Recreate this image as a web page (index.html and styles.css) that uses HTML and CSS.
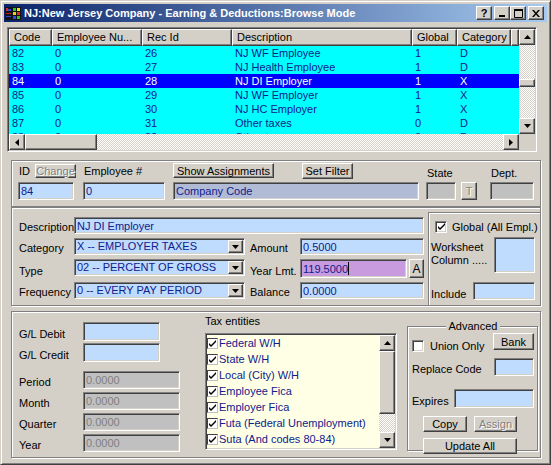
FILE: index.html
```html
<!DOCTYPE html>
<html lang="en">
<head>
    <meta charset="UTF-8">
    <title>Earning &amp; Deductions</title>
    <link rel="stylesheet" href="styles.css">
</head>
<body>
<div class="window">
    <div class="titlebar">
        <svg class="app-icon" width="16" height="16" viewBox="0 0 16 16">
            <rect x="0" y="2" width="16" height="13" fill="#141414"/>
            <rect x="1" y="3" width="2" height="3" fill="#e02828"/>
            <rect x="3" y="4" width="3" height="2" fill="#3048e0"/>
            <rect x="1" y="8" width="5" height="1" fill="#c82020"/>
            <rect x="1" y="11" width="5" height="1" fill="#3048d0"/>
            <rect x="8" y="3" width="3" height="3" fill="#28c828"/>
            <rect x="12" y="3" width="3" height="3" fill="#f0e028"/>
            <rect x="8" y="7" width="3" height="3" fill="#f0d020"/>
            <rect x="12" y="7" width="3" height="3" fill="#e02828"/>
            <rect x="8" y="11" width="3" height="3" fill="#3048e0"/>
            <rect x="12" y="11" width="3" height="3" fill="#28c828"/>
        </svg>
        <span class="title">NJ:New Jersey Company - Earning &amp; Deductions:Browse Mode</span>
        <div class="caption-buttons">
            <span class="cap-btn help">?</span>
            <span class="cap-btn"><svg width="8" height="8" viewBox="0 0 8 8"><rect x="1" y="6" width="6" height="2" fill="#000"/></svg></span>
            <span class="cap-btn"><svg width="9" height="9" viewBox="0 0 9 9"><path d="M0.5 1.5h8v7h-8z" fill="none" stroke="#000"/><rect x="0" y="0" width="9" height="2" fill="#000"/></svg></span>
            <span class="cap-btn close"><svg width="8" height="7" viewBox="0 0 8 7"><path d="M0 0h2l2 2.5 2-2.5h2l-3 3.5 3 3.5h-2l-2-2.5-2 2.5h-2l3-3.5z" fill="#000"/></svg></span>
        </div>
    </div>

    <div class="client">
        <div class="browse">
            <div class="browse-top">
                <div class="table">
                    <div class="grid-row grid-head">
                        <span>Code</span><span>Employee Nu...</span><span>Rec Id</span><span>Description</span><span>Global</span><span>Category</span><span></span>
                    </div>
                    <div class="grid-body">
                        <div class="grid-row"><span>82</span><span>0</span><span>26</span><span>NJ WF Employee</span><span>1</span><span>D</span><span></span></div>
                        <div class="grid-row"><span>83</span><span>0</span><span>27</span><span>NJ Health Employee</span><span>1</span><span>D</span><span></span></div>
                        <div class="grid-row selected"><span>84</span><span>0</span><span>28</span><span>NJ DI Employer</span><span>1</span><span>X</span><span></span></div>
                        <div class="grid-row"><span>85</span><span>0</span><span>29</span><span>NJ WF Employer</span><span>1</span><span>X</span><span></span></div>
                        <div class="grid-row"><span>86</span><span>0</span><span>30</span><span>NJ HC Employer</span><span>1</span><span>X</span><span></span></div>
                        <div class="grid-row"><span>87</span><span>0</span><span>31</span><span>Other taxes</span><span>0</span><span>D</span><span></span></div>
                        <div class="grid-row"><span>88</span><span>0</span><span>32</span><span>Other taxes</span><span>0</span><span>D</span><span></span></div>
                    </div>
                </div>
                <div class="vscroll">
                    <span class="sb-btn"><svg width="7" height="4" viewBox="0 0 7 4"><path d="M3.5 0L7 4H0z" fill="#000"/></svg></span>
                    <span class="sb-track grid-track-top"></span>
                    <span class="sb-thumb grid-thumb"></span>
                    <span class="sb-track"></span>
                    <span class="sb-btn"><svg width="7" height="4" viewBox="0 0 7 4"><path d="M0 0h7L3.5 4z" fill="#000"/></svg></span>
                </div>
            </div>
            <div class="browse-bottom">
                <div class="hscroll">
                    <span class="sb-btn"><svg width="4" height="7" viewBox="0 0 4 7"><path d="M4 0v7L0 3.5z" fill="#000"/></svg></span>
                    <span class="sb-thumb h-thumb"></span>
                    <span class="sb-track"></span>
                    <span class="sb-btn"><svg width="4" height="7" viewBox="0 0 4 7"><path d="M0 0l4 3.5L0 7z" fill="#000"/></svg></span>
                </div>
                <div class="corner"></div>
            </div>
        </div>

        <div class="panel panel-id">
            <div class="field f-id">
                <div class="field-top"><span class="lbl">ID</span><span class="btn disabled btn-change">Change</span></div>
                <div class="input w-id">84</div>
            </div>
            <div class="field f-emp">
                <div class="field-top"><span class="lbl">Employee #</span></div>
                <div class="input w-emp">0</div>
            </div>
            <div class="field f-company">
                <div class="field-top">
                    <span class="btn btn-assign">Show Assignments</span>
                    <span class="btn btn-filter">Set Filter</span>
                </div>
                <div class="input input-company">Company Code</div>
            </div>
            <div class="field f-state">
                <div class="field-top"><span class="lbl lbl-low">State</span></div>
                <div class="field-row">
                    <div class="input input-gray w-state"></div>
                    <span class="btn disabled btn-t">T</span>
                </div>
            </div>
            <div class="field f-dept">
                <div class="field-top"><span class="lbl lbl-low">Dept.</span></div>
                <div class="input input-gray w-dept"></div>
            </div>
        </div>

        <div class="panel panel-detail">
            <div class="detail-form">
                <span class="lbl">Description</span>
                <div class="input input-desc">NJ DI Employer</div>

                <span class="lbl">Category</span>
                <div class="combo"><span class="combo-text">X -- EMPLOYER TAXES</span><span class="combo-btn"><svg width="7" height="4" viewBox="0 0 7 4"><path d="M0 0h7L3.5 4z" fill="#000"/></svg></span></div>
                <span class="lbl lbl-mid">Amount</span>
                <div class="input">0.5000</div>

                <span class="lbl">Type</span>
                <div class="combo"><span class="combo-text">02 -- PERCENT OF GROSS</span><span class="combo-btn"><svg width="7" height="4" viewBox="0 0 7 4"><path d="M0 0h7L3.5 4z" fill="#000"/></svg></span></div>
                <span class="lbl lbl-mid">Year Lmt.</span>
                <div class="limit-row">
                    <div class="input input-active">119.5000<span class="caret"></span></div>
                    <span class="btn btn-a">A</span>
                </div>

                <span class="lbl">Frequency</span>
                <div class="combo"><span class="combo-text">0 -- EVERY PAY PERIOD</span><span class="combo-btn"><svg width="7" height="4" viewBox="0 0 7 4"><path d="M0 0h7L3.5 4z" fill="#000"/></svg></span></div>
                <span class="lbl lbl-mid">Balance</span>
                <div class="input">0.0000</div>
            </div>

            <div class="global-box">
                <label class="check-row">
                    <span class="checkbox checked"><svg width="7" height="7" viewBox="0 0 7 7"><path d="M0 3l2 2 5-5v2l-5 5-2-2z" fill="#000"/></svg></span>
                    <span>Global (All Empl.)</span>
                </label>
                <div class="global-row">
                    <span class="lbl lbl-worksheet">Worksheet<br>Column .....</span>
                    <div class="input input-worksheet"></div>
                </div>
                <div class="global-row include-row">
                    <span class="lbl lbl-include">Include</span>
                    <div class="input input-include"></div>
                </div>
            </div>
        </div>

        <div class="panel panel-totals">
            <div class="totals">
                <div class="t-row"><span class="lbl">G/L Debit</span><div class="input input-gl"></div></div>
                <div class="t-row t-credit"><span class="lbl">G/L Credit</span><div class="input input-gl"></div></div>
                <div class="t-row t-period"><span class="lbl">Period</span><div class="input input-disabled">0.0000</div></div>
                <div class="t-row t-acc"><span class="lbl">Month</span><div class="input input-disabled">0.0000</div></div>
                <div class="t-row t-acc"><span class="lbl">Quarter</span><div class="input input-disabled">0.0000</div></div>
                <div class="t-row t-acc"><span class="lbl">Year</span><div class="input input-disabled">0.0000</div></div>
            </div>

            <div class="tax">
                <span class="lbl">Tax entities</span>
                <div class="listbox">
                    <ul class="tax-list">
                        <li><span class="mini-check"><svg width="7" height="7" viewBox="0 0 7 7"><path d="M0 3l2 2 5-5v2l-5 5-2-2z" fill="#000"/></svg></span>Federal W/H</li>
                        <li><span class="mini-check"><svg width="7" height="7" viewBox="0 0 7 7"><path d="M0 3l2 2 5-5v2l-5 5-2-2z" fill="#000"/></svg></span>State W/H</li>
                        <li><span class="mini-check"><svg width="7" height="7" viewBox="0 0 7 7"><path d="M0 3l2 2 5-5v2l-5 5-2-2z" fill="#000"/></svg></span>Local (City) W/H</li>
                        <li><span class="mini-check"><svg width="7" height="7" viewBox="0 0 7 7"><path d="M0 3l2 2 5-5v2l-5 5-2-2z" fill="#000"/></svg></span>Employee Fica</li>
                        <li><span class="mini-check"><svg width="7" height="7" viewBox="0 0 7 7"><path d="M0 3l2 2 5-5v2l-5 5-2-2z" fill="#000"/></svg></span>Employer Fica</li>
                        <li><span class="mini-check"><svg width="7" height="7" viewBox="0 0 7 7"><path d="M0 3l2 2 5-5v2l-5 5-2-2z" fill="#000"/></svg></span>Futa (Federal Unemployment)</li>
                        <li><span class="mini-check"><svg width="7" height="7" viewBox="0 0 7 7"><path d="M0 3l2 2 5-5v2l-5 5-2-2z" fill="#000"/></svg></span>Suta (And codes 80-84)</li>
                    </ul>
                    <div class="vscroll list-scroll">
                        <span class="sb-btn"><svg width="7" height="4" viewBox="0 0 7 4"><path d="M3.5 0L7 4H0z" fill="#000"/></svg></span>
                        <span class="sb-thumb list-thumb"></span>
                        <span class="sb-track"></span>
                        <span class="sb-btn"><svg width="7" height="4" viewBox="0 0 7 4"><path d="M0 0h7L3.5 4z" fill="#000"/></svg></span>
                    </div>
                </div>
            </div>

            <fieldset class="advanced">
                <legend>Advanced</legend>
                <div class="adv-row">
                    <span class="checkbox union-check"></span>
                    <span class="union-label">Union Only</span>
                    <span class="btn btn-bank">Bank</span>
                </div>
                <div class="adv-row adv-replace">
                    <span class="lbl">Replace Code</span>
                    <div class="input input-replace"></div>
                </div>
                <div class="adv-row adv-expires">
                    <span class="lbl">Expires</span>
                    <div class="input input-expires"></div>
                </div>
                <div class="adv-row adv-buttons">
                    <span class="btn btn-copy">Copy</span>
                    <span class="btn disabled btn-assign-small">Assign</span>
                </div>
                <div class="adv-row adv-update">
                    <span class="btn btn-update">Update All</span>
                </div>
            </fieldset>
        </div>
    </div>
</div>
</body>
</html>
```

FILE: styles.css
```css
* { box-sizing: border-box; margin: 0; padding: 0; }
body {
    background: #d4d0c8;
    font: 11px "Liberation Sans", Arial, sans-serif;
    color: #000;
}

/* window frame */
.window {
    width: 551px;
    height: 465px;
    padding: 3px;
    display: flex;
    flex-direction: column;
    background: #d4d0c8;
    border: 1px solid;
    border-color: #d4d0c8 #404040 #404040 #d4d0c8;
    box-shadow: inset 1px 1px #fff, inset -1px -1px #808080;
}
.titlebar {
    height: 18px;
    flex: none;
    display: flex;
    align-items: center;
    padding: 0 3px 0 1px;
    color: #fff;
    background: linear-gradient(90deg, #0a246a, #a6caf0);
}
.app-icon { flex: none; }
.title { margin-left: 3px; font-weight: bold; white-space: nowrap; }
.caption-buttons { margin-left: auto; display: flex; }
.cap-btn {
    width: 16px;
    height: 14px;
    display: flex;
    align-items: center;
    justify-content: center;
    color: #000;
    font-weight: bold;
    font-size: 11px;
}
.cap-btn.help { margin-right: 2px; }
.cap-btn.close { margin-left: 2px; }

/* classic 3D edges */
.cap-btn, .btn, .sb-btn, .sb-thumb, .combo-btn, .grid-head span {
    background: #d4d0c8;
    border: 1px solid;
    border-color: #fff #404040 #404040 #fff;
    box-shadow: inset -1px -1px #808080, inset 1px 1px #d4d0c8;
}
.input, .combo, .browse, .listbox, .checkbox {
    border: 1px solid;
    border-color: #808080 #fff #fff #808080;
    box-shadow: inset 1px 1px #404040, inset -1px -1px #d4d0c8;
}
.panel {
    margin-left: 7px;
    width: 530px;
    border: 1px solid #808080;
    box-shadow: inset 1px 1px #fff, 1px 1px #fff;
}

.client { flex: 1; display: flex; flex-direction: column; }

/* browse grid */
.browse {
    width: 530px;
    height: 125px;
    margin: 5px 0 0 3px;
    padding: 1px;
    display: flex;
    flex-direction: column;
}
.browse-top { display: flex; height: 105px; }
.table { width: 510px; overflow: hidden; }
.grid-row {
    display: grid;
    grid-template-columns: 43px 90px 90px 180px 45px 54px 8px;
    height: 14px;
    line-height: 14px;
    background: #00ffff;
    color: #10208c;
    white-space: nowrap;
}
.grid-row span { padding-left: 3px; overflow: hidden; }
.grid-row.selected { background: #0000ff; color: #fff; }
.grid-row.grid-head { height: 17px; line-height: 15px; background: #d4d0c8; color: #000; }
.grid-head span { padding-left: 4px; }
.grid-body { height: 88px; overflow: hidden; }

.vscroll { width: 16px; display: flex; flex-direction: column; }
.sb-btn {
    width: 16px;
    height: 16px;
    flex: none;
    display: flex;
    align-items: center;
    justify-content: center;
}
.sb-track {
    flex: 1;
    background: repeating-conic-gradient(#fff 0 25%, #d4d0c8 0 50%) 0 0 / 2px 2px;
}
.grid-track-top { flex: none; height: 34px; }
.grid-thumb { height: 8px; flex: none; }
.browse-bottom { display: flex; height: 16px; }
.hscroll { width: 510px; display: flex; }
.h-thumb { width: 72px; flex: none; }
.corner { width: 16px; background: #d4d0c8; }

/* shared form bits */
.lbl { white-space: nowrap; line-height: 13px; }
.btn {
    display: flex;
    align-items: center;
    justify-content: center;
    height: 15px;
    white-space: nowrap;
}
.btn.disabled { color: #808080; text-shadow: 1px 1px #fff; }
.input {
    height: 18px;
    padding: 0 2px;
    display: flex;
    align-items: center;
    background: #bfdbfd;
    color: #10208c;
    white-space: nowrap;
    overflow: hidden;
}
.input-gray { background: #c0c0c0; }
.input-company { width: 246px; background: #b2bbd5; }

/* id panel */
.panel-id {
    margin-top: 8px;
    padding: 2px 0 6px 6px;
    display: flex;
    align-items: flex-end;
}
.field { display: flex; flex-direction: column; }
.field-top { height: 16px; margin-bottom: 3px; display: flex; align-items: flex-start; }
.field-top .lbl { line-height: 16px; padding-left: 1px; }
.field-top .lbl-low { line-height: 13px; margin-top: 4px; }
.field-row { display: flex; }
.btn-change { width: 41px; height: 14px; margin: 1px 0 0 5px; }
.w-id { width: 56px; }
.f-emp { margin-left: 7px; }
.w-emp { width: 82px; }
.f-company { margin-left: 8px; }
.btn-assign { width: 101px; }
.btn-filter { width: 51px; height: 16px; margin-left: 28px; }
.f-state { margin-left: 7px; }
.w-state { width: 30px; }
.btn-t { width: 16px; height: 18px; margin-left: 5px; }
.f-dept { margin-left: 13px; }
.w-dept { width: 44px; }

/* detail panel */
.panel-detail { display: flex; }
.detail-form {
    width: 412px;
    padding: 9px 0 6px 7px;
    display: grid;
    grid-template-columns: 55px 171px 55px 124px;
    grid-template-rows: 17px 17px 19px 17px;
    row-gap: 4px;
}
.detail-form .lbl { align-self: end; }
.lbl-mid { padding-left: 5px; }
.input-desc { grid-column: 2 / 5; height: 17px; }
.detail-form .input { height: 17px; }
.combo {
    height: 17px;
    padding: 1px;
    display: flex;
    background: #bfdbfd;
    color: #10208c;
}
.combo-text { flex: 1; line-height: 13px; padding-left: 1px; white-space: nowrap; }
.combo-btn {
    width: 15px;
    display: flex;
    align-items: center;
    justify-content: center;
}
.limit-row { display: flex; }
.detail-form .input-active { width: 107px; height: 19px; background: #c89ade; }
.caret { width: 1px; height: 13px; background: #000; }
.btn-a { width: 15px; height: 19px; margin-left: 2px; font-size: 12px; }

.global-box {
    flex: 1;
    margin: 4px 0 0 4px;
    padding: 7px 0 0 2px;
    border-top: 1px solid #808080;
    border-left: 1px solid #808080;
    box-shadow: inset 1px 1px #fff;
}
.check-row { display: flex; align-items: center; height: 13px; margin-left: 4px; }
.checkbox {
    width: 12px;
    height: 12px;
    flex: none;
    display: flex;
    align-items: center;
    justify-content: center;
    background: #fff;
}
.check-row .checkbox { margin-right: 5px; }
.global-row { display: flex; margin-top: 4px; }
.lbl-worksheet { width: 63px; padding-top: 4px; }
.input-worksheet { width: 41px; height: 36px; }
.include-row { margin-top: 9px; }
.lbl-include { width: 42px; padding-top: 6px; }
.input-include { width: 62px; }

/* totals panel */
.panel-totals {
    margin-top: 5px;
    height: 147px;
    display: flex;
    align-items: flex-start;
}
.totals { padding: 10px 0 0 7px; }
.t-row { display: flex; align-items: flex-end; }
.t-row .lbl { width: 64px; }
.input-gl { width: 77px; height: 19px; }
.t-credit { margin-top: 2px; }
.t-period { margin-top: 9px; }
.t-acc { margin-top: 3px; }
.input-disabled { width: 97px; background: #c0c0c0; color: #808080; }

.tax { margin-left: 25px; padding-top: 3px; display: flex; flex-direction: column; }
.listbox {
    width: 192px;
    height: 117px;
    margin-top: 5px;
    padding: 1px;
    display: flex;
    background: #ffffe6;
}
.tax-list { flex: 1; list-style: none; color: #10208c; }
.tax-list li { height: 16px; display: flex; align-items: center; white-space: nowrap; }
.mini-check {
    width: 11px;
    height: 11px;
    margin-right: 1px;
    display: flex;
    align-items: center;
    justify-content: center;
    background: #fff;
    border: 1px solid;
    border-color: #404040 #c0c0c0 #c0c0c0 #404040;
}
.list-thumb { height: 63px; flex: none; }

.advanced {
    width: 131px;
    height: 131px;
    margin: 8px 0 0 10px;
    padding: 0 3px 0 4px;
    min-width: 0;
    border: 1px solid #808080;
    box-shadow: inset 1px 1px #fff, 1px 1px #fff;
}
.advanced legend {
    margin: 0 auto;
    padding: 0 3px;
    line-height: 13px;
    background: #d4d0c8;
}
.adv-row { display: flex; align-items: flex-end; }
.adv-row:first-of-type { align-items: flex-start; }
.union-check { margin-top: 7px; }
.union-label { margin: 7px 0 0 6px; line-height: 13px; }
.btn-bank { width: 41px; height: 17px; margin-left: auto; }
.adv-replace { margin-top: 5px; justify-content: space-between; }
.input-replace { width: 40px; }
.adv-expires { margin-top: 13px; justify-content: space-between; }
.input-expires { width: 80px; height: 19px; }
.adv-buttons { margin-top: 8px; padding-left: 11px; }
.btn-copy { width: 44px; height: 16px; }
.btn-assign-small { width: 43px; height: 16px; margin-left: 7px; }
.adv-update { margin-top: 6px; padding-left: 11px; }
.btn-update { width: 94px; height: 16px; }
```
